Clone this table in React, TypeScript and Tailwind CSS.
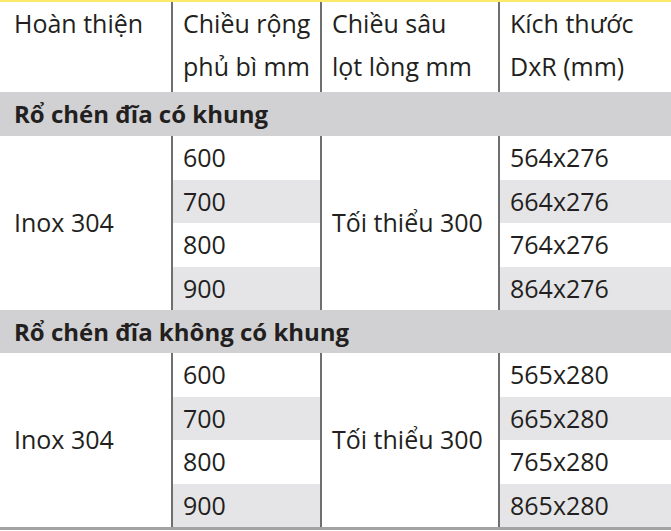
import React from 'react';

type Group = {
  title: string;
  finish: string;
  depth: string;
  rows: { width: string; size: string }[];
};

const groups: Group[] = [
  {
    title: 'Rổ chén đĩa có khung',
    finish: 'Inox 304',
    depth: 'Tối thiểu 300',
    rows: [
      { width: '600', size: '564x276' },
      { width: '700', size: '664x276' },
      { width: '800', size: '764x276' },
      { width: '900', size: '864x276' },
    ],
  },
  {
    title: 'Rổ chén đĩa không có khung',
    finish: 'Inox 304',
    depth: 'Tối thiểu 300',
    rows: [
      { width: '600', size: '565x280' },
      { width: '700', size: '665x280' },
      { width: '800', size: '765x280' },
      { width: '900', size: '865x280' },
    ],
  },
];

const rowHeights = ['h-[44px]', 'h-[43px]', 'h-[44px]', 'h-[43px]'];

function GroupBlock({ group, first }: { group: Group; first: boolean }) {
  return (
    <>
      <div
        className={`col-span-4 flex items-center bg-[#d1d1d3] pl-[14px] text-[24px] font-bold text-[#231f20] ${
          first ? 'h-[44px]' : 'h-[43px]'
        }`}
      >
        {group.title}
      </div>
      <div className="row-span-4 flex items-center pl-[14px]">{group.finish}</div>
      <div className="row-span-4 col-start-3 flex items-center border-l-2 border-[#6f6f6f] pl-[10px]">
        {group.depth}
      </div>
      {group.rows.map((r, i) => (
        <React.Fragment key={r.width}>
          <div
            className={`col-start-2 flex items-center border-l-2 border-[#6f6f6f] pl-[10px] ${rowHeights[i]} ${
              i % 2 === 1 ? 'bg-[#e5e5e7]' : 'bg-white'
            }`}
          >
            {r.width}
          </div>
          <div
            className={`col-start-4 flex items-center border-l-2 border-[#6f6f6f] pl-[10px] ${rowHeights[i]} ${
              i % 2 === 1 ? 'bg-[#e5e5e7]' : 'bg-white'
            }`}
          >
            {r.size}
          </div>
        </React.Fragment>
      ))}
    </>
  );
}

export default function App() {
  return (
    <div
      className="w-[671px] h-[531px] overflow-hidden bg-white text-[25px] text-[#231f20]"
      style={{ fontFamily: '"Open Sans", "Noto Sans", sans-serif' }}
    >
      <div className="h-[2px] bg-[#fbe96a]" />
      <div className="grid grid-cols-[171px_149px_178px_173px] grid-flow-row-dense border-b-[3px] border-[#a3a3a3]">
        {/* header */}
        <div className="h-[90px] pl-[14px] leading-[43px]">Hoàn thiện</div>
        <div className="h-[90px] border-l-2 border-[#6f6f6f] pl-[10px] leading-[43px]">
          Chiều rộng
          <br />
          phủ bì mm
        </div>
        <div className="h-[90px] border-l-2 border-[#6f6f6f] pl-[10px] leading-[43px]">
          Chiều sâu
          <br />
          lọt lòng mm
        </div>
        <div className="h-[90px] border-l-2 border-[#6f6f6f] pl-[10px] leading-[43px]">
          Kích thước
          <br />
          DxR (mm)
        </div>
        {groups.map((g, i) => (
          <GroupBlock key={g.title} group={g} first={i === 0} />
        ))}
      </div>
    </div>
  );
}
